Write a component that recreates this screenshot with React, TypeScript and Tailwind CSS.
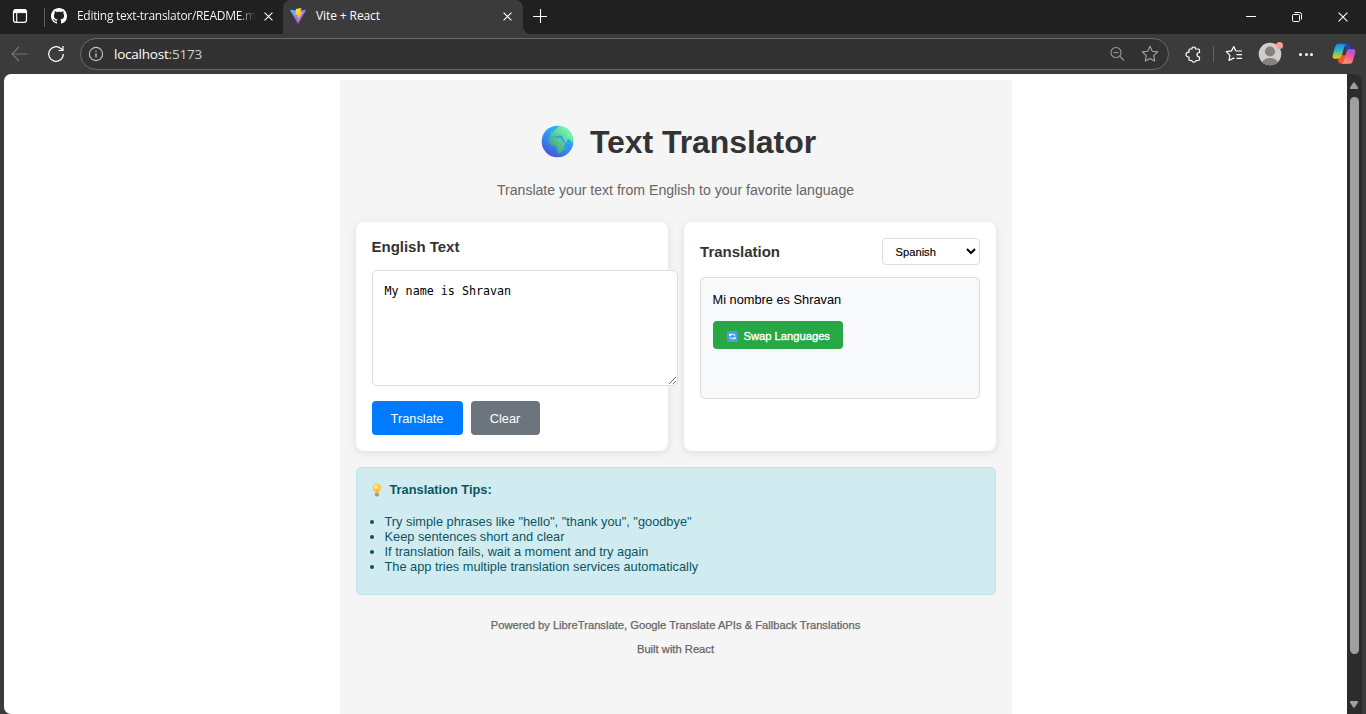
import React from "react";

function Close({ size = 9, w = 1.2 }: { size?: number; w?: number }) {
  return (
    <svg width={size} height={size} viewBox="0 0 10 10" stroke="#fff" strokeWidth={w} fill="none">
      <path d="M.6 .6l8.8 8.8M9.4 .6L.6 9.4" />
    </svg>
  );
}

function TabActionsIcon() {
  return (
    <svg width="16" height="16" viewBox="0 0 16 16" fill="none" stroke="#fff">
      <rect x="1.5" y="1.6" width="13" height="12.8" rx="2.4" strokeWidth="1.2" />
      <path d="M1.5 4.6V4a2.4 2.4 0 0 1 2.4-2.4h8.2A2.4 2.4 0 0 1 14.500 4v.6z" fill="#fff" strokeWidth="1" />
      <path d="M4.700 5v9" strokeWidth="1.1" />
    </svg>
  );
}

function GithubIcon() {
  return (
    <svg width="16" height="16" viewBox="0 0 16 16" fill="#fff">
      <path d="M8 0C3.580 0 0 3.580 0 8c0 3.540 2.290 6.530 5.470 7.590.4.070.550-.170.550-.380 0-.190-.010-.820-.010-1.490-2.010.370-2.530-.490-2.690-.940-.090-.230-.480-.940-.820-1.130-.280-.150-.680-.520-.010-.530.630-.010 1.080.580 1.230.820.720 1.210 1.870.870 2.330.660.070-.520.280-.870.510-1.070-1.780-.200-3.640-.890-3.640-3.950 0-.870.310-1.590.820-2.150-.080-.200-.360-1.020.080-2.120 0 0 .670-.210 2.200.820.640-.180 1.320-.270 2-.270s1.360.090 2 .270c1.530-1.040 2.200-.820 2.200-.820.440 1.100.160 1.920.080 2.120.510.560.820 1.270.820 2.150 0 3.070-1.870 3.750-3.650 3.950.290.250.540.730.540 1.480 0 1.070-.010 1.930-.010 2.200 0 .210.150.460.550.380A8.010 8.010 0 0 0 16 8c0-4.420-3.580-8-8-8z" />
    </svg>
  );
}

function ViteIcon() {
  return (
    <svg width="16" height="16" viewBox="0 0 32 32">
      <defs>
        <linearGradient id="vite-a" x1="0" y1="0" x2=".65" y2="1">
          <stop offset="0" stopColor="#41d1ff" />
          <stop offset="1" stopColor="#bd34fe" />
        </linearGradient>
        <linearGradient id="vite-b" x1=".4" y1="0" x2=".6" y2="1">
          <stop offset="0" stopColor="#ffea83" />
          <stop offset=".1" stopColor="#ffdd35" />
          <stop offset="1" stopColor="#ffa800" />
        </linearGradient>
      </defs>
      <path d="M31.600 4.800L17 31a.9.9 0 0 1-1.500 0L.5 4.800a.9.9 0 0 1 .9-1.300L16 6.200l14.700-2.700a.9.9 0 0 1 .9 1.300z" fill="url(#vite-a)" />
      <path d="M22.800.1L12 2.200a.5.5 0 0 0-.4.400l-.7 11.200c0 .3.200.5.500.4l3-.7c.300 0 .6.200.5.500l-.9 4.400c0 .3.200.5.500.4l1.900-.5c.300-.1.600.2.500.5l-1.400 6.800c-.1.500.500.700.7.300l8.600-17.400c.1-.3-.1-.600-.500-.500l-3.100.6c-.300 0-.5-.2-.400-.500l2-7c0-.300-.200-.600-.5-.500z" fill="url(#vite-b)" />
    </svg>
  );
}

function TabStrip() {
  return (
    <div className="flex h-[34px] shrink-0 bg-[#202020] text-[12px] text-white">
      <div className="flex w-[44px] items-center pb-[2px] pl-[12px]">
        <TabActionsIcon />
      </div>
      <div className="mt-[8px] h-[19px] w-px bg-[#5f5f5f]" />
      <div className="flex w-[238px] items-center pb-[2px] pl-[6px]">
        <GithubIcon />
        <span className="ml-[10px] w-[179px] overflow-hidden bg-linear-to-r from-white from-[90%] to-[#202020] bg-clip-text tracking-[-0.3px] whitespace-nowrap text-transparent">
          Editing text-translator/README.m
        </span>
        <span className="ml-[8px]"><Close /></span>
      </div>
      <div className="flex w-[240px] items-center rounded-t-[8px] bg-[#3b3b3b] pb-[2px] pl-[7px]">
        <ViteIcon />
        <span className="ml-[10px] w-[187px] tracking-[-0.1px] whitespace-nowrap">Vite + React</span>
        <Close />
      </div>
      <div className="w-[8px] bg-[#3b3b3b]">
        <div className="h-full rounded-bl-[8px] bg-[#202020]" />
      </div>
      <div className="flex flex-1 items-center pb-[3px] pl-[2px]">
        <svg width="14" height="14" viewBox="0 0 14 14" stroke="#fff" strokeWidth="1.100">
          <path d="M7.500 0v14M0 7.500h14" />
        </svg>
      </div>
      <div className="flex items-center pb-[1px]">
        <div className="flex w-[46px] justify-center">
          <svg width="10" height="10"><path d="M0 4.500h10" stroke="#fff" /></svg>
        </div>
        <div className="flex w-[46px] justify-center">
          <svg width="10" height="10" viewBox="0 0 10 10" fill="none" stroke="#fff">
            <rect x=".5" y="2.500" width="7" height="7" rx="1" />
            <path d="M2.500 .5h5a2 2 0 0 1 2 2v5" />
          </svg>
        </div>
        <div className="flex w-[46px] justify-center"><Close size={10} w={1.1} /></div>
      </div>
    </div>
  );
}

function Toolbar() {
  return (
    <div className="flex h-[40px] shrink-0 items-center bg-[#3b3b3b] text-white">
      <svg className="ml-[11px]" width="17" height="16" viewBox="0 0 17 16" fill="none" stroke="#777" strokeWidth="1.100">
        <path d="M16.500 8H1M8 1L1 8l7 7" />
      </svg>
      <svg className="ml-[19px]" width="18" height="18" viewBox="0 0 18 18" fill="none" stroke="#fff" strokeWidth="1.200">
        <path d="M16.300 9A7.300 7.300 0 1 1 13.800 3.500L15.800 5.300M16 1v4.500h-4.500" />
      </svg>
      <div className="ml-[15px] flex h-[32px] w-[1089px] items-center rounded-full border border-[#6a6a6a] bg-[#323232] pl-[7px]">
        <svg width="16" height="16" viewBox="0 0 16 16" fill="none" stroke="#c4c4c4" strokeWidth="1.100">
          <circle cx="8" cy="8" r="6.600" />
          <path d="M8 7.200v4M8 4.500v1.300" strokeWidth="1.300" />
        </svg>
        <span className="ml-[10px] flex-1 text-[13.500px] tracking-[-0.220px]">
          localhost<span className="text-[#d0d0d0]">:5173</span>
        </span>
        <svg width="16" height="16" viewBox="0 0 16 16" fill="none" stroke="#999" strokeWidth="1.100">
          <circle cx="7" cy="6.500" r="5" />
          <path d="M10.700 10.200l4.300 4.300M4.500 6.500h5" />
        </svg>
        <svg className="mr-[9px] ml-[16px]" width="18" height="18" viewBox="0 0 18 18" fill="none" stroke="#a5a5a5" strokeWidth="1.100" strokeLinejoin="round">
          <path d="M9 1.300l2.300 4.900 5.400.7-4 3.700 1 5.400L9 13.400 4.300 16l1-5.400-4-3.700 5.400-.7z" />
        </svg>
      </div>
      <svg className="ml-[16px]" width="17" height="17" viewBox="0 0 17 17" fill="none" stroke="#fff" strokeWidth="1.200" strokeLinejoin="round">
        <path d="M4 5V4Q4 3 5 3H7Q6.800 1 8.700 1T10.500 3H13.300Q14.500 3 14.500 4.200V6.500Q12 6.500 12 8.700T14.500 11V13.300Q14.500 14.500 13.300 14.500H11Q10.800 16.200 8.900 16.200T6.800 14.500H5Q4 14.500 4 13.500V11Q1 11 1 8.500T4 6.200Z" />
      </svg>
      <div className="ml-[11px] h-[16px] w-px bg-[#606060]" />
      <svg className="ml-[11px]" width="18" height="18" viewBox="0 0 18 18" fill="none" stroke="#fff" strokeWidth="1.200" strokeLinejoin="round">
        <path d="M10.800 6L8.800 1.500 6.500 5.900 1.300 6.600l3.600 3.700-.9 5.200 4.500-2.400.9.500M10.800 6H17M11.500 9.700H17M11.500 13.400H17" />
      </svg>
      <div className="relative ml-[15px]">
        <svg width="24" height="24" viewBox="0 0 24 24">
          <defs><clipPath id="avatar"><circle cx="12" cy="12" r="11.300" /></clipPath></defs>
          <circle cx="12" cy="12" r="11.300" fill="#d0cdca" />
          <g clipPath="url(#avatar)" fill="#85817d">
            <circle cx="12" cy="9.500" r="5.100" />
            <ellipse cx="12" cy="20.800" rx="7.800" ry="4.800" />
          </g>
        </svg>
        <span className="absolute top-[0px] right-[-1px] size-[7px] rounded-full bg-[#ff9b96]" />
      </div>
      <div className="ml-[17px] flex gap-[2px]">
        <i className="size-[3px] rounded-full bg-white" />
        <i className="ml-[0.500px] size-[3px] rounded-full bg-white" />
        <i className="ml-[0.500px] size-[3px] rounded-full bg-white" />
      </div>
      <svg className="ml-[19px]" width="24" height="22" viewBox="0 0 24 22">
        <defs>
          <linearGradient id="cp-l" x1="0" y1="0" x2="0" y2="1">
            <stop offset="0" stopColor="#1688df" />
            <stop offset=".45" stopColor="#35b6c5" />
            <stop offset=".75" stopColor="#9ac94a" />
            <stop offset="1" stopColor="#ffc400" />
          </linearGradient>
          <linearGradient id="cp-r" x1=".7" y1="0" x2=".3" y2="1">
            <stop offset="0" stopColor="#ad4ee8" />
            <stop offset=".5" stopColor="#ee5a9c" />
            <stop offset="1" stopColor="#ff9a61" />
          </linearGradient>
        </defs>
        <path d="M11 .8h4.500q2 0 2.500 2l1 3.300h-3q-1.500 0-2 1.500z" fill="#1549b8" />
        <path d="M6 .8h8.500q-1.500.5-2.200 3L9.500 13.500q-.8 2.300-3 2.300H3q-3 0-2.300-3.500L3 4Q4 .8 6 .8z" fill="url(#cp-l)" />
        <path d="M5.800 15.800q2.900 0 3.700-2.500l.3-1h4L12.500 20.800H9q-2 0-2.500-2z" fill="#f25830" />
        <path d="M18 20.800H9.700q1.500-.5 2.300-3L14.700 8q.7-1.900 3-1.900h3q3.200 0 2.500 3.500L21 17.500q-.8 3.300-3 3.300z" fill="url(#cp-r)" />
      </svg>
    </div>
  );
}

function Globe() {
  return (
    <svg width="33" height="33" viewBox="0 0 33 33">
      <defs>
        <linearGradient id="sea" x1=".75" y1=".2" x2=".25" y2="1">
          <stop offset="0" stopColor="#29b6fa" />
          <stop offset=".55" stopColor="#3387f0" />
          <stop offset="1" stopColor="#4a50cc" />
        </linearGradient>
        <linearGradient id="land" gradientUnits="userSpaceOnUse" x1="8" y1="22" x2="28" y2="4">
          <stop offset="0" stopColor="#3f9c80" />
          <stop offset="1" stopColor="#78ffb0" />
        </linearGradient>
        <clipPath id="globe"><circle cx="16.500" cy="16.500" r="15.800" /></clipPath>
      </defs>
      <circle cx="16.500" cy="16.500" r="15.800" fill="url(#sea)" />
      <g clipPath="url(#globe)" fill="url(#land)" strokeLinejoin="round">
        <path d="M9 8l1.500-1.500 2 .5 1.500-2.500L17 2l3-2h13v16.500l-1.500-1-.5 3-2-4-2.500-.5-1 4-2.500-2.500-1.500-4.500-3-.5-1.500 1-1.500-1-1 1.500-2.500-1-2.500 1-1-2 2-1z" />
        <path d="M8 13l3-1.500 3.500.5 1 1 4.500 0 2 4 2.500 1.500-2 3.500-1 3.500-2.500 3.500-2-.5-1.500-5.500-1-2.500-5-.5-2-3z" />
        <path d="M23.300 22.500l1.200.3-.7 2.200-1-.3z" />
      </g>
    </svg>
  );
}

function Bulb() {
  return (
    <svg width="12" height="14" viewBox="0 0 12 14">
      <path d="M5 .5A4.300 4.300 0 0 0 .7 4.800C.7 7 2.500 7.800 3 10.200h4c.5-2.400 2.300-3.200 2.300-5.400A4.300 4.300 0 0 0 5 .5z" fill="#ffc847" />
      <circle cx="4" cy="4" r="2" fill="#ffe79a" />
      <path d="M4.200 6l.8.800.8-.8v4H4.200z" fill="#f7ab4c" />
      <path d="M3 10.200h4v2q0 1.300-2 1.300t-2-1.300z" fill="#a196b0" />
    </svg>
  );
}

function SwapIcon() {
  return (
    <svg width="11" height="11" viewBox="0 0 11 11">
      <rect width="10.500" height="11" rx="1" fill="#4b9bee" />
      <path d="M3 4.500V3.300h3.500q1.300 0 1.300 1.700M7.800 6v1.700H4.500Q3.200 7.700 3.200 6" fill="none" stroke="#fff" strokeWidth="1" />
      <path d="M2.200 2.500l2.300 2.500H2.200zM8.500 8.500L6.200 6H8.500z" fill="#fff" />
    </svg>
  );
}

const tips = [
  'Try simple phrases like "hello", "thank you", "goodbye"',
  "Keep sentences short and clear",
  "If translation fails, wait a moment and try again",
  "The app tries multiple translation services automatically",
];

function Translator() {
  return (
    <main className="mx-auto mt-[6px] h-[634px] w-[672px] bg-[#f5f5f5] px-4 font-['Liberation_Sans',Arial,sans-serif]">
      <header className="flex flex-col items-center pt-[41px]">
        <h1 className="flex h-[40px] items-center gap-[16px] pl-[6px] text-[32px] font-bold tracking-[-0.060px] whitespace-nowrap text-[#333]">
          <Globe />
          <span className="pt-[1px]">Text Translator</span>
        </h1>
        <p className="mt-[21px] h-[16px] text-[14.080px] leading-[16px] whitespace-nowrap text-[#666]">
          Translate your text from English to your favorite language
        </p>
      </header>
      <div className="mt-[24px] flex gap-4">
        <section className="h-[229px] w-[312px] rounded-[8px] bg-white p-4 shadow-[0_2px_8px_rgba(0,0,0,0.1)]">
          <h2 className="h-[18px] text-[14.980px] leading-[18px] font-bold text-[#333]">English Text</h2>
          <textarea
            defaultValue="My name is Shravan"
            spellCheck={false}
            className="mt-[14px] block h-[116px] w-[306px] resize rounded-[5px] border border-[#ddd] bg-white py-[13px] pr-[11px] pl-[12px] font-['DejaVu_Sans_Mono',monospace] text-[11.700px] leading-[15px] text-black outline-none"
          />
          <div className="mt-[15px] flex gap-2 text-[12.800px] text-white">
            <button className="h-[34px] w-[91px] rounded-[4px] bg-[#007bff] pt-[1px]">Translate</button>
            <button className="h-[34px] w-[69px] rounded-[4px] bg-[#6c757d] pt-[1px]">Clear</button>
          </div>
        </section>
        <section className="h-[229px] w-[312px] rounded-[8px] bg-white p-4 shadow-[0_2px_8px_rgba(0,0,0,0.1)]">
          <div className="flex h-[27px] items-center justify-between">
            <h2 className="pt-[1px] pl-[0.600px] text-[14.980px] font-bold text-[#333]">Translation</h2>
            <div className="flex h-[27px] w-[98px] items-center justify-between rounded-[4px] border border-[#ddd] pr-[3px] pl-[13px] text-[11.200px] text-black">
              <span className="pt-[2px] [-webkit-text-stroke:0.150px_#000]">Spanish</span>
              <svg width="10" height="7" viewBox="0 0 10 7" fill="none" stroke="#000" strokeWidth="2">
                <path d="M1 1l4 4 4-4" />
              </svg>
            </div>
          </div>
          <div className="mt-3 h-[122px] rounded-[5px] border border-[#ddd] bg-[#f8f9fa] px-3 pt-[14px] text-[12.800px] text-black">
            <p className="leading-[15px]">Mi nombre es Shravan</p>
            <button className="mt-[14px] flex h-[28px] w-[130px] items-center gap-[6px] rounded-[4px] bg-[#28a745] pt-[2px] pl-[14px] text-[11.200px] whitespace-nowrap text-white [-webkit-text-stroke:0.350px_white]">
              <SwapIcon />
              Swap Languages
            </button>
          </div>
        </section>
      </div>
      <section className="mt-4 h-[128px] rounded-[5px] border border-[#bee5eb] bg-[#d1ecf1] px-[15px] pt-[14px] text-[12.800px] text-[#0c5460]">
        <h3 className="flex h-[15px] items-center gap-[6px] leading-[15px] font-bold">
          <Bulb />
          Translation Tips:
        </h3>
        <ul className="mt-[17px] list-disc pl-[13px] leading-[15px]">
          {tips.map((t) => (
            <li key={t}>{t}</li>
          ))}
        </ul>
      </section>
      <footer className="mt-[18px] text-center text-[11.200px] leading-[24px] text-[#666] [-webkit-text-stroke:0.250px_#666]">
        <p>Powered by LibreTranslate, Google Translate APIs &amp; Fallback Translations</p>
        <p>Built with React</p>
      </footer>
    </main>
  );
}

export default function App() {
  return (
    <div className="flex h-[714px] w-[1366px] flex-col overflow-hidden bg-[#3b3b3b] font-['Open_Sans','Noto_Sans',sans-serif]">
      <TabStrip />
      <Toolbar />
      <div className="flex h-[640px] pl-[4px]">
        <div className="w-[1343px] overflow-hidden rounded-l-[7px] bg-white">
          <Translator />
        </div>
        <div className="flex w-[15px] flex-col items-center rounded-tr-[7px] bg-[#2c2c2c] pt-[8px]">
          <svg className="mr-px" width="10" height="7" viewBox="0 0 10 8" fill="#9f9f9f"><path d="M4 .8Q5-.5 6 .8L9.700 6.500Q10 8 8.500 8h-7Q0 8 .3 6.500z" /></svg>
          <div className="mt-[8px] h-[557px] w-[9px] rounded-full bg-[#9f9f9f]" />
          <svg className="mt-[47px] mr-px" width="10" height="7" viewBox="0 0 10 8" fill="#9f9f9f"><path d="M4 7.200Q5 8.500 6 7.200L9.700 1.500Q10 0 8.500 0h-7Q0 0 .3 1.500z" /></svg>
        </div>
      </div>
    </div>
  );
}
